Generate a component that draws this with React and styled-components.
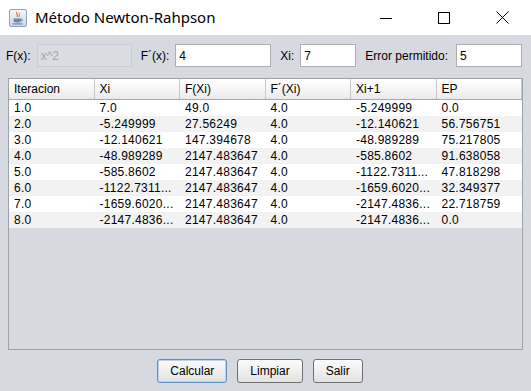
import React from "react";
import styled, { createGlobalStyle } from "styled-components";

const GlobalStyle = createGlobalStyle`
  html, body { margin: 0; padding: 0; background: #d6d9df; }
  body { font-family: "Liberation Sans", Arial, sans-serif; font-size: 12px; color: #000; }
  * { box-sizing: border-box; }
`;

const Window = styled.div`
  width: 531px;
  height: 391px;
  background: #d6d9df;
  display: flex;
  flex-direction: column;
  overflow: hidden;
`;

const TitleBar = styled.div`
  height: 35px;
  background: #ffffff;
  display: flex;
  align-items: center;
  flex-shrink: 0;
`;

const AppIcon = styled.div`
  width: 20px;
  height: 20px;
  margin-left: 8px;
  margin-right: 7px;
  display: flex;
`;

const Title = styled.div`
  font-family: "Noto Sans", "Segoe UI", sans-serif;
  font-size: 15px;
  color: #000;
  flex: 1;
  margin-top: -1px;
`;

const WinButton = styled.div`
  width: 58px;
  height: 35px;
  display: flex;
  align-items: center;
  justify-content: center;
`;

const Body = styled.div`
  flex: 1;
  display: flex;
  flex-direction: column;
  padding: 9px 0 0 0;
`;

const FormRow = styled.div`
  display: flex;
  align-items: center;
  height: 23px;
  padding-left: 6px;
`;

const Label = styled.span`
  margin-right: ${(p) => p.$gap || 6}px;
  white-space: nowrap;
`;

const Field = styled.div`
  width: ${(p) => p.$w}px;
  height: 23px;
  margin-right: 9px;
  border: 1px solid ${(p) => (p.$disabled ? "#c9ccd2" : "#abadb3")};
  background: ${(p) => (p.$disabled ? "#d9dce2" : "#ffffff")};
  color: ${(p) => (p.$disabled ? "#a3a6ab" : "#000")};
  padding-left: 3px;
  display: flex;
  align-items: center;
  font-size: 12px;
`;

const TablePane = styled.div`
  margin: 11px 0 0 8px;
  width: 515px;
  height: 272px;
  border: 1px solid #9da1a8;
  background: #d6d9df;
  display: flex;
  flex-direction: column;
`;

const HeaderRow = styled.div`
  display: grid;
  grid-template-columns: repeat(6, 1fr);
  height: 21px;
  background: linear-gradient(#ffffff, #f4f4f5 60%, #eaeaec);
  border-bottom: 1px solid #a5a7ab;
`;

const HeaderCell = styled.div`
  padding-left: 5px;
  display: flex;
  align-items: center;
  border-right: 1px solid #c6c8cc;
  white-space: nowrap;
  overflow: hidden;
`;

const Row = styled.div`
  display: grid;
  grid-template-columns: repeat(6, 1fr);
  height: 16px;
  background: ${(p) => (p.$alt ? "#f2f2f2" : "#ffffff")};
`;

const Cell = styled.div`
  padding-left: 5px;
  line-height: 16px;
  white-space: nowrap;
  overflow: hidden;
  letter-spacing: 0.25px;
`;

const ButtonBar = styled.div`
  display: flex;
  justify-content: center;
  gap: 10px;
  margin-top: 9px;
  padding-right: 11px;
`;

const Button = styled.button`
  height: 24px;
  padding: 0 ${(p) => p.$pad || 12}px;
  font-family: "Liberation Sans", Arial, sans-serif;
  font-size: 12px;
  color: #000;
  border-radius: 3px;
  border: 1px solid ${(p) => (p.$default ? "#5d8fc4" : "#707070")};
  box-shadow: ${(p) => (p.$default ? "inset 0 0 0 1px #b9d3ee" : "none")};
  background: linear-gradient(#fbfbfb, #eeeeee 55%, #e2e2e2);
  cursor: default;
`;

const columns = ["Iteracion", "Xi", "F(Xi)", "F\u00B4(Xi)", "Xi+1", "EP"];

const rows = [
  ["1.0", "7.0", "49.0", "4.0", "-5.249999", "0.0"],
  ["2.0", "-5.249999", "27.56249", "4.0", "-12.140621", "56.756751"],
  ["3.0", "-12.140621", "147.394678", "4.0", "-48.989289", "75.217805"],
  ["4.0", "-48.989289", "2147.483647", "4.0", "-585.8602", "91.638058"],
  ["5.0", "-585.8602", "2147.483647", "4.0", "-1122.7311...", "47.818298"],
  ["6.0", "-1122.7311...", "2147.483647", "4.0", "-1659.6020...", "32.349377"],
  ["7.0", "-1659.6020...", "2147.483647", "4.0", "-2147.4836...", "22.718759"],
  ["8.0", "-2147.4836...", "2147.483647", "4.0", "-2147.4836...", "0.0"],
];

function JavaIcon() {
  return (
    <svg width="20" height="20" viewBox="0 0 20 20">
      <defs>
        <linearGradient id="ig" x1="0" y1="0" x2="0" y2="1">
          <stop offset="0" stopColor="#f4f7fb" />
          <stop offset="1" stopColor="#c9d6e6" />
        </linearGradient>
      </defs>
      <rect x="1.5" y="1.5" width="17" height="17" rx="1.5" fill="url(#ig)" stroke="#8fa3bd" />
      <path d="M9 4 C7 6, 11 7, 9 9" stroke="#e2762a" strokeWidth="1.2" fill="none" />
      <path d="M11.5 5 C10 6.5, 12.5 7, 11 9" stroke="#e2762a" strokeWidth="1" fill="none" />
      <path d="M5.5 10.5 H13 V12.5 C13 14, 11.5 14.5, 9.3 14.5 C7 14.5, 5.5 14, 5.5 12.5 Z" fill="#6f86a6" />
      <path d="M13 11 C15 11, 15 13, 13 13" stroke="#6f86a6" strokeWidth="1" fill="none" />
      <rect x="4.5" y="15.3" width="10" height="1.2" fill="#6f86a6" />
    </svg>
  );
}

export default function App() {
  return (
    <>
      <GlobalStyle />
      <Window>
        <TitleBar>
          <AppIcon>
            <JavaIcon />
          </AppIcon>
          <Title>Método Newton-Rahpson</Title>
          <WinButton>
            <svg width="12" height="12" viewBox="0 0 12 12">
              <line x1="0" y1="6.5" x2="12" y2="6.5" stroke="#000" strokeWidth="1" />
            </svg>
          </WinButton>
          <WinButton>
            <svg width="12" height="12" viewBox="0 0 12 12">
              <rect x="0.5" y="0.5" width="11" height="11" fill="none" stroke="#000" strokeWidth="1" />
            </svg>
          </WinButton>
          <WinButton>
            <svg width="13" height="13" viewBox="0 0 13 13">
              <path d="M0.5 0.5 L12.5 12.5 M12.5 0.5 L0.5 12.5" stroke="#000" strokeWidth="1" />
            </svg>
          </WinButton>
        </TitleBar>
        <Body>
          <FormRow>
            <Label>F(x):</Label>
            <Field $w={95} $disabled>x^2</Field>
            <Label>F´(x):</Label>
            <Field $w={96}>4</Field>
            <Label>Xi:</Label>
            <Field $w={56}>7</Field>
            <Label $gap={8}>Error permitido:</Label>
            <Field $w={66}>5</Field>
          </FormRow>
          <TablePane>
            <HeaderRow>
              {columns.map((c) => (
                <HeaderCell key={c}>{c}</HeaderCell>
              ))}
            </HeaderRow>
            {rows.map((r, i) => (
              <Row key={i} $alt={i % 2 === 1}>
                {r.map((v, j) => (
                  <Cell key={j}>{v}</Cell>
                ))}
              </Row>
            ))}
          </TablePane>
          <ButtonBar>
            <Button $default $pad={12}>Calcular</Button>
            <Button $pad={12}>Limpiar</Button>
            <Button $pad={12}>Salir</Button>
          </ButtonBar>
        </Body>
      </Window>
    </>
  );
}
